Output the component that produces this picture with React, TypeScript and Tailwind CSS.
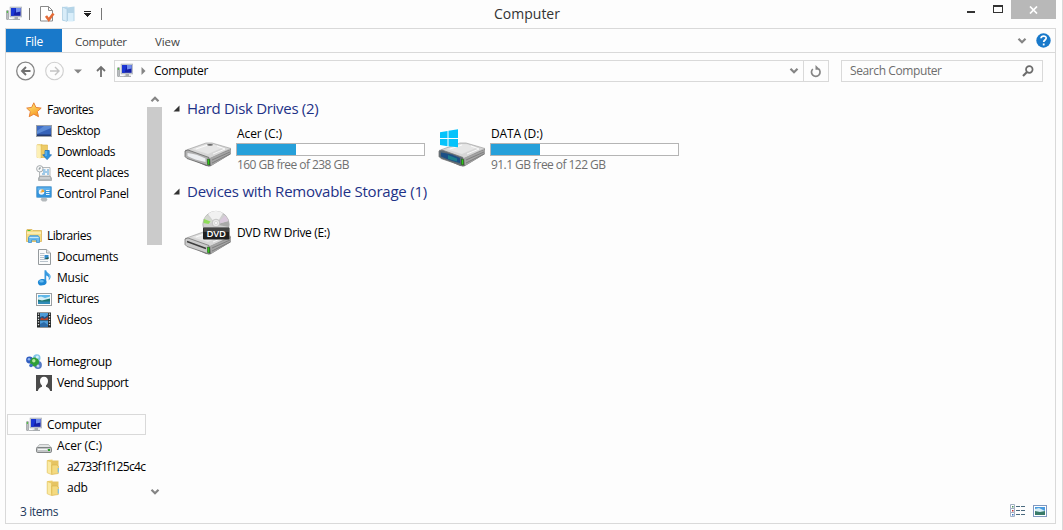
import React from "react";

type IconProps = { className?: string };

const ComputerIcon = ({ className = "" }: IconProps) => (
  <svg width="16" height="16" viewBox="0 0 16 16" className={`shrink-0 ${className}`}>
    <rect x="0.5" y="4.5" width="2" height="9" rx="0.5" fill="#b9bdc0" stroke="#8d9194" strokeWidth="0.6" />
    <rect x="0.8" y="5.2" width="1.2" height="1.6" fill="#3fc52c" />
    <rect x="4" y="1" width="12" height="10" fill="#c3c8d0" stroke="#a5abb5" strokeWidth="0.5" />
    <rect x="5" y="2" width="9.6" height="7.8" fill="#1420a8" />
    <path d="M5 2h5L7.500 9.800H5z" fill="#1a35d4" />
    <path d="M10 2h4.600v3.500L10 6.500z" fill="#6f8cec" />
    <path d="M8.500 11h3.500v1.700h2v1.300H6.500v-1.300h2z" fill="#a9adb0" />
    <path d="M2.500 13.500h4.500" stroke="#b5b8bb" />
  </svg>
);

const StarIcon = () => (
  <svg width="16" height="16" viewBox="0 0 16 16" className="shrink-0">
    <defs>
      <linearGradient id="star" x2="0.5" y2="1">
        <stop stopColor="#fff27b" />
        <stop offset="1" stopColor="#f79b28" />
      </linearGradient>
    </defs>
    <path d="M7.800.8l2.100 4.600 5.300.7-3.900 3.500 1.200 5.100-4.700-2.500-4.600 2.500 1.200-5.100L.700 6.100l5-.7z" fill="url(#star)" stroke="#e8853a" strokeWidth="1" />
  </svg>
);

const DesktopIcon = () => (
  <svg width="16" height="16" viewBox="0 0 16 16" className="shrink-0">
    <rect x="0.5" y="2.500" width="15" height="11" fill="#3562b8" stroke="#9aa0a8" />
    <path d="M1 11L15 5V3H1z" fill="#5b8bd6" />
    <path d="M1 3h7L1 8z" fill="#3f6cc4" />
    <rect x="1" y="11.500" width="14" height="1.500" fill="#20386f" />
  </svg>
);

const FolderIcon = ({ className = "" }: IconProps) => (
  <svg width="16" height="16" viewBox="0 0 16 16" className={`shrink-0 ${className}`}>
    <path d="M1.500 1l5-.5v12.500H1.500z" fill="#f0cf6a" />
    <path d="M5.500 1.500h7v12h-7z" fill="#e6c462" />
    <path d="M1.200 1.500l4.300 1.500v12.500l-4.300-1.700z" fill="#fbeaa2" stroke="#e0bd55" strokeWidth="0.600" />
    <path d="M5.800 6h5l1.500 1v7.500l-6.500 1z" fill="#f4da80" stroke="#d9b248" strokeWidth="0.600" />
    <path d="M11.700 9h1.300v4.500h-1.300z" fill="#83c3e8" />
  </svg>
);

const DownloadsIcon = () => (
  <svg width="16" height="16" viewBox="0 0 16 16" className="shrink-0">
    <path d="M1 .8L6 0v13.500H1z" fill="#fae89b" stroke="#e2c060" strokeWidth="0.6" />
    <path d="M5 1h6.500v12.500H5z" fill="#edcb66" stroke="#dab14a" strokeWidth="0.6" />
    <path d="M1 1l3.500 1.500v12.300L1 13.500z" fill="#fdf0b5" />
    <path d="M9 6.500h4.200v4.300h2.300l-4.400 4.800-4.400-4.800H9z" fill="#2d93df" stroke="#1e6eb7" strokeWidth="0.8" />
    <path d="M10 7v5" stroke="#7ec8f7" />
  </svg>
);

const RecentIcon = () => (
  <svg width="16" height="16" viewBox="0 0 16 16" className="shrink-0">
    <path d="M3.500 2.500h10.500v9.500H3.500z" fill="#f7f8f8" stroke="#a2a7aa" strokeWidth="0.8" />
    <path d="M7 5h2.500M11 5h2M7 7h6M6 9h3M11 9h2" stroke="#489bd6" />
    <circle cx="3.800" cy="3.800" r="3.200" fill="#f8f9f9" stroke="#9ca2a5" strokeWidth="0.9" />
    <path d="M4 2v2H2.500" fill="none" stroke="#536168" strokeWidth="0.7" />
    <path d="M4 11h10l1.500 2v2.500H2.500V13z" fill="#b3b8ba" stroke="#94999b" strokeWidth="0.6" />
    <path d="M4 13h10" stroke="#e5e7e8" />
  </svg>
);

const ControlPanelIcon = () => (
  <svg width="16" height="16" viewBox="0 0 16 16" className="shrink-0">
    <rect x="0.500" y="0.500" width="15" height="11" rx="0.800" fill="#3494dc" stroke="#75aed8" />
    <rect x="1.500" y="1.500" width="13" height="3" fill="#62b1ea" />
    <circle cx="5.500" cy="6" r="2.800" fill="#eef6fb" />
    <path d="M5.500 6V3.200A2.800 2.800 0 018.300 6z" fill="#f2a531" />
    <path d="M4.500 6h2" stroke="#f2a531" />
    <path d="M10 4.500h3.500M10 6.500h3.500M10 8.500h3.500" stroke="#e6f4ff" />
    <path d="M5.500 12h5l1 1.700-1.500 1.800H6.500L4.500 13.700z" fill="#b4b9bc" />
  </svg>
);

const LibrariesIcon = () => (
  <svg width="16" height="16" viewBox="0 0 16 16" className="shrink-0">
    <path d="M.5 2.500L1 1.500h5l1 1h8.500v11H.5z" fill="#f5dc83" stroke="#d9b558" strokeWidth="0.8" />
    <path d="M1.500 2.500h3" stroke="#4dc437" />
    <path d="M1 5h14" stroke="#fdf2be" strokeWidth="1.500" />
    <path d="M2.500 14.500V9.500l1.300-1.800h8.400l1.300 1.800v5h-3V12h-5v2.500z" fill="#6cb9ec" stroke="#3b91cf" strokeWidth="0.8" />
    <path d="M3.500 9.500h9" stroke="#c2e6fb" />
  </svg>
);

const DocumentsIcon = () => (
  <svg width="16" height="16" viewBox="0 0 16 16" className="shrink-0">
    <path d="M2.500.5h8l4 3.500v11.500h-12z" fill="#fafbfb" stroke="#959a9d" />
    <path d="M10.500.5V4h4" fill="#e3e6e8" stroke="#959a9d" strokeWidth="0.8" />
    <path d="M4 4.500h4.500M4 6.500h4M4 8.500h4M4 10.500h8M4 12.500h8" stroke="#a7b5c0" strokeWidth="0.8" />
    <rect x="8.500" y="6" width="4" height="4" fill="#348ccd" />
    <path d="M8.500 10l4-2v2z" fill="#265f49" />
  </svg>
);

const MusicIcon = () => (
  <svg width="16" height="16" viewBox="0 0 16 16" className="shrink-0">
    <path d="M8.500.3h1.700c.3 2.700 4.700 3.200 4.400 6.800-.2 1.600-1 2.700-2 3.400.7-2.600.2-4.200-2.400-5v7H8.500z" fill="#3799df" />
    <path d="M12 3.200c2 1.700 2 3.500 1.600 5" stroke="#9ad3f6" fill="none" strokeWidth="0.700" />
    <ellipse cx="6.200" cy="12.200" rx="4.300" ry="3.200" transform="rotate(-10 6.200 12.200)" fill="#1f88d4" />
    <ellipse cx="5.500" cy="11.200" rx="2.300" ry="1.200" fill="#6abcf0" />
  </svg>
);

const PicturesIcon = () => (
  <svg width="16" height="16" viewBox="0 0 16 16" className="shrink-0">
    <rect x="0.500" y="2.500" width="15" height="12" fill="#fdfdfd" stroke="#9a9fa2" />
    <rect x="2" y="4" width="12" height="9" fill="#60b7e8" />
    <path d="M2 6.500l3-1 4 1.500 5-1.500v5H2z" fill="#d4eef5" />
    <path d="M2 8.500l4 1 8-2v3.500H2z" fill="#1e7770" />
    <rect x="2" y="10.500" width="12" height="2.500" fill="#308bb8" />
  </svg>
);

const VideosIcon = () => (
  <svg width="16" height="16" viewBox="0 0 16 16" className="shrink-0">
    <rect x="1" y="0.500" width="14" height="15" fill="#242829" />
    <rect x="4" y="1" width="8" height="6.500" fill="#4c9bd8" />
    <rect x="4" y="8.500" width="8" height="6.500" fill="#4c9bd8" />
    <path d="M4 5l3-1 1.500 1.500L12 3v4.500H4z" fill="#254f83" />
    <path d="M5.500 5.500l3 1.500L12 5v3H4z" fill="#b5452c" />
    <path d="M4 12l4-2 4 3v2H4z" fill="#2b69a5" />
    <path d="M2.500 1.500v13M13.500 1.500v13" stroke="#e0e4e5" strokeWidth="1.300" strokeDasharray="1.300 1.300" />
  </svg>
);

const HomegroupIcon = () => (
  <svg width="16" height="16" viewBox="0 0 16 16" className="shrink-0">
    <circle cx="10.800" cy="4" r="3.700" fill="#7fc5e6" />
    <circle cx="3.500" cy="6" r="3.400" fill="#315ec0" />
    <circle cx="12" cy="11" r="3.900" fill="#5479c4" />
    <circle cx="8.500" cy="8" r="4.500" fill="#2f9e38" />
    <circle cx="5" cy="11.500" r="1.800" fill="#3d6dc4" />
    <circle cx="3" cy="5.200" r="1.300" fill="#8fb1ee" />
    <circle cx="7.800" cy="6.700" r="1.700" fill="#b9e9a2" />
    <circle cx="11.300" cy="2.900" r="1.500" fill="#d4f0fb" />
    <circle cx="12" cy="12" r="1.500" fill="#c0d4f3" />
  </svg>
);

const UserIcon = () => (
  <svg width="16" height="16" viewBox="0 0 16 16" className="shrink-0">
    <rect width="16" height="16" fill="#4b4b4b" />
    <path d="M8 1.800c2.600 0 4 1.700 4 4.200 0 1.800-.7 3.500-2 4.400v1.300c1.700.6 3.500 1.500 4.200 4.300H1.800c.7-2.800 2.500-3.700 4.200-4.300v-1.300C4.700 9.500 4 7.800 4 6c0-2.500 1.400-4.200 4-4.200z" fill="#fdfdfd" />
  </svg>
);

const SmallDriveIcon = () => (
  <svg width="16" height="16" viewBox="0 0 16 16" className="shrink-0">
    <path d="M3.500 6.500h9L15.500 10H.5z" fill="#e3e5e5" stroke="#a3a6a7" strokeWidth="0.700" />
    <rect x="0.500" y="9.500" width="15" height="5" rx="1.200" fill="#c2c5c6" stroke="#777b7c" strokeWidth="0.900" />
    <path d="M2 11.500h9" stroke="#f4f5f5" />
    <rect x="12" y="11" width="2" height="2" fill="#2ca629" />
  </svg>
);

const DriveBody = ({ face, edge }: { face: string; edge: string }) => (
  <g>
    <path d="M1 25v5.500L22 40l4 .5L47 28v-5L24 31z" fill="#737373" />
    <path d="M1 24.500L22 17h6l19 5.500L25 33z" fill="#d6d6d6" stroke="#979797" strokeWidth="0.600" />
    <path d="M8 23l15-5 6 .3 10 3.200-15 6.500z" fill="#e6e6e6" />
    <path d="M12 23l12-4M33 20l8 3-12 5" fill="none" stroke="#fff" strokeWidth="0.800" />
    <path d="M1 25l3-1 21 7.500V40L3 32.500l-2-2z" fill={face} stroke={edge} strokeWidth="0.800" />
    <path d="M26 32l21-8.500v4L27 40z" fill="#a4a4a4" />
    <path d="M28 34l18-8M28 37l18-9" stroke="#6e6e6e" strokeWidth="0.700" />
    <path d="M23.500 33l2 .5v5.500l-2-.5z" fill="#30ca17" stroke="#225719" strokeWidth="0.600" />
  </g>
);

const DriveC = () => (
  <svg width="48" height="48" viewBox="0 0 48 48">
    <g transform="translate(0 1)">
      <DriveBody face="#b0b0b0" edge="#686868" />
      <path d="M3.500 27c6 .5 12 2.500 18 5.500V36C14 34.500 8 32.500 3.500 30z" fill="#eceef1" />
      <ellipse cx="26" cy="18.800" rx="3" ry="0.900" fill="#626262" />
    </g>
  </svg>
);

const DriveD = () => (
  <svg width="48" height="48" viewBox="0 0 48 48">
    <g transform="translate(0 1)">
      <DriveBody face="#5a6974" edge="#777" />
      <path d="M3 26.500c6 .5 13 2.500 19 5.500v5C14 35 8 33 3 30.500z" fill="#1c4f86" />
      <path d="M10 29l9 3.500v3l-9-2.500z" fill="#1b7f8c" />
    </g>
    <path d="M2 7.200l7.500-1.300v7H2zM10.500 5.700L20 4.200v8.700h-9.500zM2 13.900h7.500v7.300L2 20zM10.500 13.900H20v8.300l-9.500-1z" fill="#04c3fb" />
  </svg>
);

const DvdDrive = () => (
  <svg width="48" height="48" viewBox="0 0 48 48">
    <g transform="translate(0 5)">
      <DriveBody face="#cacaca" edge="#777" />
      <path d="M3 27.500l19 7" stroke="#3d3d3d" strokeWidth="1.500" />
    </g>
    <circle cx="32" cy="15.500" r="13.200" fill="#cfcfcf" stroke="#a3a3a3" strokeWidth="0.700" />
    <path d="M32 15.500L24 5a13 13 0 0115-1z" fill="#f1f1f1" />
    <path d="M32 15.500L19.500 12a13 13 0 013.500-6z" fill="#d3d8cf" />
    <path d="M20 10l6.500 2.500-2 2.500-5-1z" fill="#8fdc5a" />
    <path d="M32 15.500L44.500 12a13 13 0 01.3 6z" fill="#a9a9a9" />
    <path d="M32 15.500l9-9a13 13 0 013.500 5.500z" fill="#d9c9dc" />
    <circle cx="32" cy="14" r="3.800" fill="#e9e9e9" stroke="#b2b2b2" strokeWidth="0.700" />
    <circle cx="32" cy="14" r="1.500" fill="#fff" stroke="#bbb" strokeWidth="0.500" />
    <rect x="19" y="18.500" width="26.500" height="12" rx="1" fill="#202020" />
    <rect x="19.500" y="19" width="25.500" height="4" fill="#444" />
    <text x="32.200" y="28.100" textAnchor="middle" fontFamily="Open Sans, sans-serif" fontSize="9.500" fontWeight="600" fill="#fff">DVD</text>
  </svg>
);

const Chevron = ({ up = false }: { up?: boolean }) => (
  <svg width="10" height="8" viewBox="0 0 10 8" className={up ? "rotate-180" : ""}>
    <path d="M1.500 1.800L5 5.300l3.500-3.500" fill="none" stroke="#858585" strokeWidth="2.200" />
  </svg>
);

type NavItem = { label: string; icon: React.ReactNode; level: number; track?: string; selected?: boolean } | null;

const nav: NavItem[] = [
  { label: "Favorites", icon: <StarIcon />, level: 0, track: "tracking-[-0.5px]" },
  { label: "Desktop", icon: <DesktopIcon />, level: 1, track: "tracking-[-0.45px]" },
  { label: "Downloads", icon: <DownloadsIcon />, level: 1, track: "tracking-[-0.5px]" },
  { label: "Recent places", icon: <RecentIcon />, level: 1, track: "tracking-[-0.37px]" },
  { label: "Control Panel", icon: <ControlPanelIcon />, level: 1, track: "tracking-[-0.3px]" },
  null,
  { label: "Libraries", icon: <LibrariesIcon />, level: 0, track: "tracking-[-0.5px]" },
  { label: "Documents", icon: <DocumentsIcon />, level: 1, track: "tracking-[-0.35px]" },
  { label: "Music", icon: <MusicIcon />, level: 1 },
  { label: "Pictures", icon: <PicturesIcon />, level: 1, track: "tracking-[-0.4px]" },
  { label: "Videos", icon: <VideosIcon />, level: 1, track: "tracking-[-0.35px]" },
  null,
  { label: "Homegroup", icon: <HomegroupIcon />, level: 0, track: "tracking-[-0.27px]" },
  { label: "Vend Support", icon: <UserIcon />, level: 1, track: "tracking-[-0.45px]" },
  null,
  { label: "Computer", icon: <ComputerIcon />, level: 0, selected: true, track: "tracking-[-0.25px]" },
  { label: "Acer (C:)", icon: <SmallDriveIcon />, level: 1, track: "tracking-[-0.1px]" },
  { label: "a2733f1f125c4c", icon: <FolderIcon />, level: 2, track: "tracking-[-0.7px]" },
  { label: "adb", icon: <FolderIcon />, level: 2 },
];

const indents = ["pl-[18px]", "pl-[28px]", "pl-[38px]"];

function NavRow({ item }: { item: NavItem }) {
  if (!item) return <div className="h-[21px]" />;
  return (
    <div className={`flex h-[21px] items-center gap-[5px] border ${indents[item.level]} ${item.selected ? "border-[#d9d9d9]" : "border-transparent"}`}>
      {item.icon}
      <span className={item.track ?? ""}>{item.label}</span>
    </div>
  );
}

function GroupHeader({ label, className }: { label: string; className: string }) {
  return (
    <div className="flex h-[22px] items-center gap-[7px] pl-[10px] text-[#1e3287]">
      <svg width="7" height="7" viewBox="0 0 7 7"><path d="M6.500.5v6h-6z" fill="#333" /></svg>
      <span className={className}>{label}</span>
    </div>
  );
}

function Drive({ icon, name, detail, used }: { icon: React.ReactNode; name: string; detail: string; used: number }) {
  return (
    <div className="flex h-[48px] w-[241px]">
      <div className="w-[52px] shrink-0">{icon}</div>
      <div className="w-[189px]">
        <div className="h-[18px] pl-[1px] leading-[17px] tracking-[-0.1px]">{name}</div>
        <div className="h-[13px] border border-[#b5b5b5] bg-white">
          <div className="h-full bg-[#26a0da]" style={{ width: used }} />
        </div>
        <div className="pl-[1px] leading-[17px] tracking-[-0.55px] text-[#707070]">{detail}</div>
      </div>
    </div>
  );
}

export default function App() {
  return (
    <div className="flex h-[530px] w-[1063px] flex-col overflow-hidden whitespace-nowrap border-r border-[#d9d9d9] bg-[#fdfdfd] pl-[5px] pr-[6px] font-['Open_Sans',sans-serif] text-[12px] tracking-[-0.2px] text-black">
      <header className="flex h-[28px] items-start">
        <div className="flex h-[28px] w-[97px] items-center pl-[1px]">
          <ComputerIcon />
          <div className="ml-[7px] h-[12px] w-px bg-[#777]" />
          <svg width="16" height="16" viewBox="0 0 16 16" className="ml-[10px]">
            <path d="M.5.5h8l4 4v10.500H.5z" fill="#fff" stroke="#8a8a8a" />
            <path d="M8.500.5v4h4" fill="none" stroke="#8a8a8a" />
            <path d="M6 10l2.800 3.800L13.500 7.500" fill="none" stroke="#e36b37" strokeWidth="2.600" />
          </svg>
          <svg width="16" height="16" viewBox="0 0 16 16" className="ml-[6px]">
            <path d="M.5 1l5-.5v14.500h-5z" fill="#b8d9ee" />
            <path d="M5 1.500l7.500-1V15H5z" fill="#b5d5e8" />
            <path d="M.5 1l4.500 2v12.500L.5 14z" fill="#d8ecf8" stroke="#a8cade" strokeWidth="0.600" />
            <path d="M6 7h5.500v8.500H6z" fill="#d9eefa" />
          </svg>
          <svg width="7" height="6" viewBox="0 0 7 6" className="ml-[6px]" shapeRendering="crispEdges">
            <path d="M0 0h7v1H0zM0 2h7v1H6v1H5v1H4v1H3V5H2V4H1V3H0z" fill="#222" />
          </svg>
          <div className="ml-[10px] h-[12px] w-px shrink-0 bg-[#777]" />
        </div>
        <h1 className="flex-1 pr-[8px] text-center text-[14px] leading-[27px] tracking-[0px] text-[#333]">Computer</h1>
        <div className="flex h-[19px] w-[96px] items-start">
          <div className="ml-[7px] mt-[11px] h-[2px] w-[8px] bg-[#333]" />
          <div className="ml-[18px] mt-[5px] h-[8px] w-[10px] border border-t-2 border-[#333]" />
          <div className="ml-auto flex h-[19px] w-[45px] items-center justify-center bg-[#b8b8b8]">
            <svg width="9" height="8" viewBox="0 0 9 8"><path d="M1 .5l7 7M8 .5l-7 7" stroke="#fff" strokeWidth="1.700" /></svg>
          </div>
        </div>
      </header>

      <main className="flex h-[496px] flex-col border border-[#d9d9d9]">
        <nav className="flex h-[24px] shrink-0 border-b border-[#d9d9d9] leading-[26px] text-[#444]">
          <div className="h-[23px] w-[56px] bg-[#1979ca] text-center leading-[25px] text-white">File</div>
          <span className="ml-[13px] w-[51px] text-[11.5px] tracking-[-0.3px]">Computer</span>
          <span className="ml-[29px] text-[11.5px] tracking-[-0.1px]">View</span>
          <div className="ml-auto flex h-[23px] items-center gap-[9px] pr-[4px]">
            <Chevron />
            <svg width="15" height="15" viewBox="0 0 15 15">
              <circle cx="7.500" cy="7.500" r="7.200" fill="#1979ca" />
              <path d="M5 5.300c.2-3 5.300-2.900 5.200-.2 0 1.800-2.500 2-2.500 4" fill="none" stroke="#fff" strokeWidth="1.700" />
              <rect x="6.800" y="10.500" width="1.800" height="1.900" fill="#fff" />
            </svg>
          </div>
        </nav>

        <div className="flex h-[36px] shrink-0 items-center pl-[10px] pr-[12px]">
          <svg width="20" height="20" viewBox="0 0 20 20">
            <circle cx="9.500" cy="10" r="8.800" fill="none" stroke="#858585" strokeWidth="1.300" />
            <path d="M14.500 10H6M10 6l-4 4 4 4" fill="none" stroke="#707070" strokeWidth="1.900" />
          </svg>
          <svg width="20" height="20" viewBox="0 0 20 20" className="ml-[9px]">
            <circle cx="9.500" cy="10" r="8.800" fill="none" stroke="#cfcfcf" strokeWidth="1.100" />
            <path d="M5 10h9M10 6l4 4-4 4" fill="none" stroke="#c3c3c3" strokeWidth="1.400" />
          </svg>
          <svg width="8" height="5" viewBox="0 0 8 5" className="ml-[9px]"><path d="M0 .5h8l-4 4z" fill="#858585" /></svg>
          <svg width="10" height="13" viewBox="0 0 10 13" className="ml-[14px]">
            <path d="M5 12V2M1 6l4-4 4 4" fill="none" stroke="#707070" strokeWidth="1.800" />
          </svg>
          <div className="ml-[8px] flex h-[22px] w-[715px] items-center border border-[#d9d9d9] pl-[2px]">
            <ComputerIcon />
            <svg width="5" height="8" viewBox="0 0 5 8" className="ml-[8px]"><path d="M.5 0v8l4-4z" fill="#858585" /></svg>
            <span className="ml-[8px] tracking-[-0.3px]">Computer</span>
            <div className="ml-auto mr-[4px] flex"><Chevron /></div>
            <div className="flex h-[20px] w-[25px] items-center justify-center border-l border-[#d9d9d9]">
              <svg width="12" height="13" viewBox="0 0 12 13">
                <path d="M8.500 3.800A4.300 4.300 0 112.800 4" fill="none" stroke="#858585" strokeWidth="1.700" />
                <path d="M5.500 0v4.800h4.800z" fill="#858585" />
              </svg>
            </div>
          </div>
          <div className="ml-[12px] flex h-[22px] w-[202px] items-center border border-[#d9d9d9] pl-[8px] pr-[8px] text-[#6d6d6d]">
            <span className="tracking-[-0.4px]">Search Computer</span>
            <svg width="12" height="12" viewBox="0 0 12 12" className="ml-auto">
              <circle cx="7.300" cy="4.500" r="3.300" fill="none" stroke="#6b6b6b" strokeWidth="1.700" />
              <path d="M5 7l-4 4" stroke="#6b6b6b" strokeWidth="2.200" />
            </svg>
          </div>
        </div>

        <div className="flex h-[409px] shrink-0">
          <aside className="ml-[1px] w-[139px] shrink-0 pt-[10px]">
            {nav.map((item, i) => <NavRow key={i} item={item} />)}
          </aside>
          <div className="ml-[1px] flex w-[15px] shrink-0 flex-col items-center">
            <div className="flex h-[18px] items-center pt-[1px]"><Chevron up /></div>
            <div className="h-[138px] w-[15px] bg-[#cbcbcb]" />
            <div className="mt-auto flex h-[12px] items-center"><Chevron /></div>
          </div>
          <section className="pl-[1px] pt-[8px]">
            <GroupHeader label="Hard Disk Drives (2)" className="text-[15px] tracking-[-0.3px]" />
            <div className="flex gap-[13px] pl-[21px] pt-[6px]">
              <Drive icon={<DriveC />} name="Acer (C:)" detail="160 GB free of 238 GB" used={59} />
              <Drive icon={<DriveD />} name="DATA (D:)" detail="91.1 GB free of 122 GB" used={49} />
            </div>
            <div className="pt-[7px]">
              <GroupHeader label="Devices with Removable Storage (1)" className="text-[15px] tracking-[-0.23px]" />
            </div>
            <div className="flex h-[62px] items-center gap-[5px] pl-[21px]">
              <DvdDrive />
              <span className="tracking-[-0.35px]">DVD RW Drive (E:)</span>
            </div>
          </section>
        </div>
        <footer className="flex h-[25px] items-center pl-[14px] pr-[8px] text-[#1e395b]">
          <span className="pt-[2px] tracking-[-0.4px]">3 items</span>
          <svg width="16" height="14" viewBox="0 0 16 14" className="ml-auto">
            <path d="M.5.500h4v4h-4zM.5 4.500h4v4h-4zM.5 8.500h4v4h-4z" fill="#fff" stroke="#a3b0c4" />
            <path d="M2 2h1.500v1.500H2z" fill="#478d58" /><path d="M2 6h1.500v1.500H2z" fill="#c23232" /><path d="M2 10h1.500v1.500H2z" fill="#3772c5" />
            <path d="M6 2.500h4M11 2.500h4M6 6.500h4M11 6.500h4M6 10.500h4M11 10.500h4" stroke="#49697e" />
          </svg>
          <svg width="14" height="12" viewBox="0 0 14 12" className="ml-[7px]">
            <rect x="0.500" y="0.500" width="13" height="11" fill="#fff" stroke="#7e98c0" />
            <rect x="2" y="2" width="10" height="8" fill="#4b9cdf" />
            <path d="M2 4l4-1 6 3v2H2z" fill="#d5edf5" /><path d="M2 6l5 1 5-1v4H2z" fill="#397b69" />
          </svg>
        </footer>
      </main>
    </div>
  );
}
